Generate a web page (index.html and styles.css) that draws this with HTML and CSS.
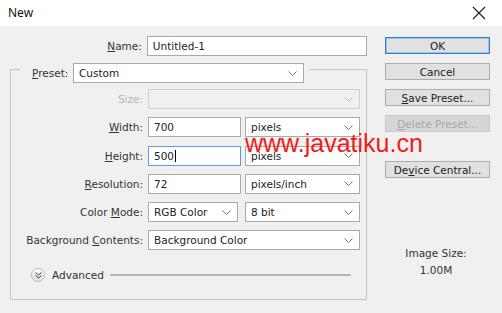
FILE: index.html
```html
<!DOCTYPE html>
<html lang="en">
<head>
  <meta charset="UTF-8">
  <title>New</title>
  <link rel="stylesheet" href="styles.css">
</head>
<body>

  <div class="titlebar">
    <span class="title">New</span>
    <svg class="close" width="14" height="14" viewBox="0 0 14 14">
      <path d="M1 1 L13 13 M13 1 L1 13" stroke="#222" stroke-width="1.2" fill="none"/>
    </svg>
  </div>

  <div class="dialog">
    <div class="form">
      <div class="row name-row">
        <label class="lbl"><u>N</u>ame:</label>
        <div class="field name-field">Untitled-1</div>
      </div>

      <fieldset class="group">
        <legend class="preset">
          <label><u>P</u>reset:</label>
          <div class="field select preset-select">
            <span>Custom</span>
            <svg class="chev" width="9" height="5" viewBox="0 0 9 5"><polyline points="0.5,0.5 4.5,4.5 8.5,0.5" fill="none" stroke="#777"/></svg>
          </div>
        </legend>

        <div class="rows">
          <div class="row">
            <label class="lbl disabled">Size:</label>
            <div class="field select full off">
              <span></span>
              <svg class="chev" width="9" height="5" viewBox="0 0 9 5"><polyline points="0.5,0.5 4.5,4.5 8.5,0.5" fill="none" stroke="#bbb"/></svg>
            </div>
          </div>
          <div class="row">
            <label class="lbl"><u>W</u>idth:</label>
            <div class="field num">700</div>
            <div class="field select unit">
              <span>pixels</span>
              <svg class="chev" width="9" height="5" viewBox="0 0 9 5"><polyline points="0.5,0.5 4.5,4.5 8.5,0.5" fill="none" stroke="#777"/></svg>
            </div>
          </div>
          <div class="row">
            <label class="lbl"><u>H</u>eight:</label>
            <div class="field num focus">500<span class="caret"></span></div>
            <div class="field select unit">
              <span>pixels</span>
              <svg class="chev" width="9" height="5" viewBox="0 0 9 5"><polyline points="0.5,0.5 4.5,4.5 8.5,0.5" fill="none" stroke="#777"/></svg>
            </div>
          </div>
          <div class="row">
            <label class="lbl"><u>R</u>esolution:</label>
            <div class="field num">72</div>
            <div class="field select unit">
              <span>pixels/inch</span>
              <svg class="chev" width="9" height="5" viewBox="0 0 9 5"><polyline points="0.5,0.5 4.5,4.5 8.5,0.5" fill="none" stroke="#777"/></svg>
            </div>
          </div>
          <div class="row">
            <label class="lbl">Color <u>M</u>ode:</label>
            <div class="field select mode">
              <span>RGB Color</span>
              <svg class="chev" width="9" height="5" viewBox="0 0 9 5"><polyline points="0.5,0.5 4.5,4.5 8.5,0.5" fill="none" stroke="#777"/></svg>
            </div>
            <div class="field select bits">
              <span>8 bit</span>
              <svg class="chev" width="9" height="5" viewBox="0 0 9 5"><polyline points="0.5,0.5 4.5,4.5 8.5,0.5" fill="none" stroke="#777"/></svg>
            </div>
          </div>
          <div class="row">
            <label class="lbl">Background <u>C</u>ontents:</label>
            <div class="field select full">
              <span>Background Color</span>
              <svg class="chev" width="9" height="5" viewBox="0 0 9 5"><polyline points="0.5,0.5 4.5,4.5 8.5,0.5" fill="none" stroke="#777"/></svg>
            </div>
          </div>
        </div>

        <div class="advanced">
          <span class="adv-icon">
            <svg width="7" height="7" viewBox="0 0 7 7"><polyline points="0.5,0.5 3.5,3 6.5,0.5" fill="none" stroke="#333"/><polyline points="0.5,3.5 3.5,6 6.5,3.5" fill="none" stroke="#333"/></svg>
          </span>
          <span class="adv-text">Advanced</span>
          <span class="adv-line"></span>
        </div>
      </fieldset>
    </div>

    <div class="side">
      <button class="btn default">OK</button>
      <button class="btn">Cancel</button>
      <button class="btn"><u>S</u>ave Preset...</button>
      <button class="btn" disabled><u>D</u>elete Preset...</button>
      <button class="btn device">De<u>v</u>ice Central...</button>
      <div class="image-size">
        <div>Image Size:</div>
        <div class="size-value">1.00M</div>
      </div>
    </div>
  </div>

  <div class="watermark">www.javatiku.cn</div>

</body>
</html>
```

FILE: styles.css
```css
body {
  margin: 0;
  width: 502px;
  height: 313px;
  background-color: #f0f0f0;
  font-family: 'DejaVu Sans', sans-serif;
  font-size: 10.5px;
  color: #333;
  overflow: hidden;
  position: relative;
}

.titlebar {
  height: 26px;
  background-color: #fff;
  display: flex;
  align-items: center;
  justify-content: space-between;
  padding: 0 16px 0 8px;
}

.title {
  font-family: 'Noto Sans', sans-serif;
  font-size: 12px;
  color: #111;
  margin-top: -2px;
}

.close {
  margin-top: -1px;
}

.dialog {
  display: flex;
}

.form {
  padding: 10px 0 0 10px;
  width: 357px;
}

.row {
  display: flex;
  align-items: center;
  height: 20px;
}

.lbl {
  width: 132px;
  text-align: right;
  margin-right: 5px;
}

.name-row .lbl {
  width: 133px;
}

.disabled {
  color: #b4b4b4;
}

.field {
  box-sizing: border-box;
  height: 20px;
  background-color: #fff;
  border: 1px solid #a9a9a9;
  padding: 0 5px;
  display: flex;
  align-items: center;
  color: #222;
}

.name-field {
  width: 222px;
}

.select {
  justify-content: space-between;
  padding-right: 6px;
}

.select.off {
  background-color: #f0f0f0;
  border-color: #d0d0d0;
}

.group {
  margin: 0;
  padding: 0;
  width: 357px;
  height: 244px;
  box-sizing: border-box;
  border: 1px solid #c6c6c6;
}

.preset {
  margin-left: 9px;
  padding: 7px 5px 0 12px;
  display: flex;
  align-items: center;
}

.preset label {
  width: 41px;
}

.preset-select {
  width: 231px;
}

.rows {
  margin-top: 6px;
  display: flex;
  flex-direction: column;
  gap: 8.3px;
}

.full {
  width: 212px;
}

.num {
  width: 93px;
  margin-right: 4px;
}

.num.focus {
  border-color: #5a9bd8;
}

.caret {
  display: inline-block;
  width: 1px;
  height: 12px;
  background-color: #000;
  margin-left: 1px;
}

.unit,
.bits {
  width: 115px;
}

.mode {
  width: 90px;
  margin-right: 7px;
}

.advanced {
  display: flex;
  align-items: center;
  margin-top: 18px;
  padding-left: 20px;
  height: 14px;
}

.adv-icon {
  width: 12px;
  height: 12px;
  border-radius: 50%;
  border: 1px solid #b8b8b8;
  background: linear-gradient(#ffffff, #e2e2e2);
  display: flex;
  align-items: center;
  justify-content: center;
  margin-right: 7px;
}

.adv-text {
  color: #333;
  margin-right: 6px;
}

.adv-line {
  width: 241px;
  height: 2px;
  background-color: #b4b4b4;
}

.side {
  padding: 11px 0 0 18px;
  width: 105px;
  display: flex;
  flex-direction: column;
}

.btn {
  box-sizing: border-box;
  height: 17px;
  width: 105px;
  margin: 0 0 9px 0;
  padding: 0;
  background-color: #e1e1e1;
  border: 1px solid #adadad;
  font-family: 'DejaVu Sans', sans-serif;
  font-size: 10.5px;
  color: #222;
  text-align: center;
}

.btn.default {
  border-color: #2f7fd0;
  box-shadow: inset 0 0 0 1px #9cc4ea;
}

.btn:disabled {
  color: #a8a8a8;
  background-color: #d6d6d6;
  border-color: #c8c8c8;
}

.btn.device {
  margin-top: 20px;
}

.image-size {
  margin-top: 60px;
  text-align: center;
  color: #333;
  margin-left: -3px;
}

.size-value {
  margin-top: 5px;
}

.watermark {
  position: absolute;
  left: 245px;
  top: 131px;
  font-family: 'Liberation Sans', sans-serif;
  font-size: 25px;
  line-height: 25px;
  color: #f01c1c;
}
```
